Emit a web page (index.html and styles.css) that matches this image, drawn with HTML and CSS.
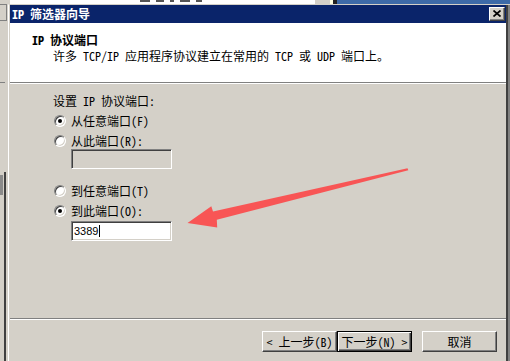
FILE: index.html
```html
<!DOCTYPE html>
<html lang="zh-CN">
<head>
<meta charset="utf-8">
<title>IP 筛选器向导</title>
<link rel="stylesheet" href="styles.css">
</head>
<body>
<div class="desktop">
  <div class="topstrip">
    <div class="ts-gray"></div>
    <div class="ts-white">
      <span class="frag w10"></span><span class="frag w8"></span><span class="frag w4"></span><span class="frag w10"></span><span class="frag w6"></span>
    </div>
    <div class="ts-tan"></div>
    <div class="ts-yellow"></div>
    <div class="ts-black"></div>
    <div class="ts-blue"></div>
  </div>
  <div class="main">
    <div class="leftstrip">
      <div class="ls-btn"></div>
      <div class="ls-hline"></div>
      <div class="ls-lower">
        <div class="ls-box"></div>
      </div>
    </div>
    <div class="dialog">
      <div class="titlebar">
        <span class="title">IP 筛选器向导</span>
        <span class="close">
          <svg width="8" height="7" viewBox="0 0 8 7"><path d="M0.5 0.5 L7.5 6.5 M7.5 0.5 L0.5 6.5" stroke="#000" stroke-width="1.7" fill="none"/></svg>
        </span>
      </div>
      <div class="header">
        <div class="h-title">IP 协议端口</div>
        <div class="h-sub">许多 TCP/IP 应用程序协议建立在常用的 TCP 或 UDP 端口上。</div>
      </div>
      <div class="sep"></div>
      <div class="body">
        <div class="label">设置 IP 协议端口:</div>
        <div class="radio-row r1"><span class="radio checked"></span><span>从任意端口(F)</span></div>
        <div class="radio-row r2"><span class="radio"></span><span>从此端口(R):</span></div>
        <div class="textbox disabled tb1"></div>
        <div class="radio-row r3"><span class="radio"></span><span>到任意端口(T)</span></div>
        <div class="radio-row r4"><span class="radio checked"></span><span>到此端口(O):</span></div>
        <div class="textbox tb2"><span class="tb-text">3389</span><span class="caret"></span></div>
      </div>
      <div class="sep"></div>
      <div class="footer">
        <div class="btn">&lt; 上一步(B)</div>
        <div class="btn default">下一步(N) &gt;</div>
        <div class="btn cancel">取消</div>
      </div>
    </div>
  </div>
  <svg class="arrow" width="510" height="361" viewBox="0 0 510 361">
    <polygon points="407.5,168.2 408.3,170.2 216.8,219.8 217.2,227.6 187.5,223 211.3,206.3 213,211.6" fill="#f85555"/>
  </svg>
</div>
</body>
</html>
```
FILE: styles.css
```css
* { box-sizing: border-box; }
html, body { margin: 0; padding: 0; }
body {
  width: 510px;
  height: 361px;
  overflow: hidden;
  background: #d4d0c8;
  font-family: "Noto Sans Mono CJK SC", "Noto Sans CJK SC", sans-serif;
  font-size: 12px;
  color: #000;
}
.desktop {
  position: relative;
  width: 510px;
  height: 361px;
  overflow: hidden;
  display: flex;
  flex-direction: column;
}
.topstrip {
  height: 4px;
  display: flex;
  overflow: hidden;
  flex: none;
}
.ts-gray { width: 10px; background: #d4d0c8; }
.ts-white {
  width: 305px;
  background: #fff;
  display: flex;
  gap: 6px;
  padding-left: 130px;
}
.frag { height: 2px; background: #555; }
.w10 { width: 10px; }
.w8 { width: 8px; }
.w6 { width: 6px; }
.w4 { width: 4px; }
.ts-tan { width: 15px; background: #d4d0c8; }
.ts-yellow { width: 3px; background: #ffffe1; }
.ts-black { width: 4px; background: #222; }
.ts-blue { flex: 1; background: #3d6aa8; }

.main { flex: 1; display: flex; }
.leftstrip {
  width: 8px;
  flex: none;
  display: flex;
  flex-direction: column;
  background: #d4d0c8;
}
.ls-btn {
  width: 7px;
  height: 17px;
  border: 1px solid #808080;
  border-left: none;
  background: #d4d0c8;
}
.ls-hline {
  width: 5px;
  height: 1px;
  margin-top: 61px;
  background: #808080;
}
.ls-lower {
  margin-top: 89px;
  width: 6px;
  flex: 1;
  border-right: 2px solid #404040;
  padding-top: 3px;
}
.ls-box { width: 3px; height: 20px; background: #8a8a8a; }

.dialog {
  width: 502px;
  flex: none;
  border-left: 1px solid #fff;
  border-top: 1px solid #d4d0c8;
  padding: 0 4px 0 1px;
  background: #d4d0c8;
  box-shadow: inset -2px 0 #808080, inset -4px 0 #404040;
  display: flex;
  flex-direction: column;
}
.titlebar {
  height: 18px;
  background: #0a246a;
  display: flex;
  align-items: center;
  justify-content: space-between;
  padding: 0 1px 0 2px;
}
.title {
  color: #fff;
  font-weight: bold;
  line-height: 16px;
}
.close {
  width: 16px;
  height: 14px;
  background: #d4d0c8;
  border: 1px solid;
  border-color: #fff #404040 #404040 #fff;
  box-shadow: inset -1px -1px #808080;
  display: flex;
  align-items: center;
  justify-content: center;
  padding-bottom: 1px;
}
.close svg { display: block; }
.header {
  height: 59px;
  background: #fff;
  padding: 9px 0 0 22px;
  line-height: 16px;
}
.h-title { font-weight: bold; }
.h-sub { padding-left: 21px; }
.sep {
  height: 2px;
  border-top: 1px solid #808080;
  border-bottom: 1px solid #fff;
  flex: none;
}
.body {
  height: 234px;
  padding: 9px 0 0 43px;
  display: flex;
  flex-direction: column;
  align-items: flex-start;
  line-height: 16px;
}
.radio-row {
  height: 16px;
  display: flex;
  align-items: center;
  gap: 5px;
  padding-left: 1px;
  margin-top: 4px;
}
.r3 { margin-top: 14px; }
.radio {
  position: relative;
  width: 12px;
  height: 12px;
  border-radius: 50%;
  background: #fff;
  border: 1px solid;
  border-color: #808080 #fff #fff #808080;
  box-shadow: inset 1px 1px #404040, inset -1px -1px #d4d0c8;
  flex: none;
}
.radio.checked::after {
  content: "";
  position: absolute;
  left: 3px;
  top: 3px;
  width: 4px;
  height: 4px;
  border-radius: 50%;
  background: #000;
}
.textbox {
  width: 101px;
  height: 20px;
  margin-left: 18px;
  background: #fff;
  border: 1px solid;
  border-color: #808080 #fff #fff #808080;
  box-shadow: inset 1px 1px #404040, inset -1px -1px #d4d0c8;
  display: flex;
  align-items: center;
  padding-left: 2px;
}
.textbox.disabled { background: #d4d0c8; }
.tb2 { margin-top: 2px; }
.tb-text {
  font-family: "Liberation Sans", Arial, sans-serif;
  font-size: 11px;
  line-height: 12px;
}
.caret {
  width: 1px;
  height: 12px;
  background: #000;
  margin-left: 1px;
}
.footer {
  flex: 1;
  display: flex;
  justify-content: flex-end;
  align-items: flex-start;
  padding: 11px 9px 0 0;
}
.btn {
  width: 75px;
  height: 21px;
  background: #d4d0c8;
  border: 1px solid;
  border-color: #fff #404040 #404040 #fff;
  box-shadow: inset -1px -1px #808080;
  display: flex;
  align-items: center;
  justify-content: center;
  line-height: 16px;
  white-space: nowrap;
}
.btn.default {
  border: 1px solid #000;
  box-shadow: inset 1px 1px #fff, inset -1px -1px #404040, inset -2px -2px #808080;
}
.btn.cancel { margin-left: 10px; }
.arrow {
  position: absolute;
  left: 0;
  top: 0;
  pointer-events: none;
}
```
